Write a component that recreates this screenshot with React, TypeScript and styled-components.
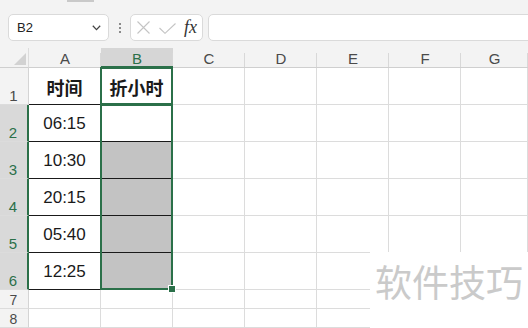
import styled, { createGlobalStyle } from 'styled-components'

const GREEN = '#2b7049'
const GRID = '#dcdcdc'
const INK = '#1a1a1a'

const times = ['06:15', '10:30', '20:15', '05:40', '12:25']
const cols = ['A', 'B', 'C', 'D', 'E', 'F', 'G']

const Global = createGlobalStyle`
  html, body { margin: 0; padding: 0; background: #ffffff; }
  body { width: 528px; height: 328px; overflow: hidden; font-family: "Liberation Sans", "Noto Sans CJK SC", sans-serif; }
`

function Blanks({ count }: { count: number }) {
  return (
    <>
      {Array.from({ length: count }).map((_, i) => (
        <Cell key={i} />
      ))}
    </>
  )
}

export default function App() {
  return (
    <Page>
      <Global />
      <Toolbar>
        <Grip />
        <BarRow>
          <NameBox>
            <span>B2</span>
            <svg width="9" height="6" viewBox="0 0 9 6">
              <path d="M0.8 0.8 L4.5 4.6 L8.2 0.8" fill="none" stroke="#444" strokeWidth="1.3" />
            </svg>
          </NameBox>
          <Dots>
            <i />
            <i />
            <i />
          </Dots>
          <FxGroup>
            <svg width="13" height="13" viewBox="0 0 13 13">
              <path d="M0.5 0.5 L12.5 12.5 M12.5 0.5 L0.5 12.5" stroke="#c4c4c4" strokeWidth="1.1" />
            </svg>
            <svg width="17" height="11" viewBox="0 0 17 11">
              <path d="M0.5 5 L6 10.3 L16.5 0.5" fill="none" stroke="#c4c4c4" strokeWidth="1.1" />
            </svg>
            <Fx>fx</Fx>
          </FxGroup>
          <FormulaBar />
        </BarRow>
      </Toolbar>

      <Sheet>
        <Corner>
          <svg width="12" height="12" viewBox="0 0 12 12">
            <path d="M12 0 L12 12 L0 12 Z" fill="#d2d2d2" />
          </svg>
        </Corner>
        {cols.map((c) => (
          <ColHead key={c} $sel={c === 'B'}>{c}</ColHead>
        ))}

        <RowHead>1</RowHead>
        <Cell $table $bold>时间</Cell>
        <Cell $table $bold>折小时</Cell>
        <Blanks count={5} />

        {times.map((t, r) => (
          <Row key={t} n={r + 2} time={t} fill={r > 0} />
        ))}

        {[7, 8].map((n) => (
          <Row key={n} n={n} />
        ))}

        <Selection $row="2 / 3" />
        <Selection $row="3 / 8">
          <Handle />
        </Selection>
      </Sheet>

      <Watermark>软件技巧</Watermark>
    </Page>
  )
}

function Row({ n, time, fill }: { n: number; time?: string; fill?: boolean }) {
  if (!time) {
    return (
      <>
        <RowHead $small>{n}</RowHead>
        <Blanks count={7} />
      </>
    )
  }
  return (
    <>
      <RowHead $sel>{n}</RowHead>
      <Cell $table>{time}</Cell>
      <Cell $table $fill={fill} />
      <Blanks count={5} />
    </>
  )
}

const Page = styled.div`
  position: relative;
  width: 528px;
  height: 328px;
  overflow: hidden;
`

const Toolbar = styled.div`
  height: 48px;
  background: #f3f3f3;
  display: flex;
  flex-direction: column;
`

const Grip = styled.div`
  width: 27px;
  height: 2px;
  margin-left: 67px;
  background: #c9c9c9;
`

const BarRow = styled.div`
  display: flex;
  align-items: center;
  margin-top: 12px;
  padding-left: 8px;
`

const NameBox = styled.div`
  width: 101px;
  height: 27px;
  box-sizing: border-box;
  border: 1px solid #dadada;
  border-radius: 5px;
  background: #fff;
  display: flex;
  align-items: center;
  justify-content: space-between;
  padding: 0 7px 0 8px;
  font-size: 13px;
  color: #222;
`

const Dots = styled.div`
  width: 21px;
  display: flex;
  flex-direction: column;
  align-items: center;
  gap: 2px;
  i { width: 2px; height: 2px; background: #8a8a8a; display: block; }
`

const FxGroup = styled.div`
  width: 73px;
  height: 27px;
  box-sizing: border-box;
  border: 1px solid #dadada;
  border-radius: 5px;
  background: #fff;
  display: flex;
  align-items: center;
  padding-left: 6px;
  gap: 9px;
  svg:nth-child(2) { margin-top: 2px; }
`

const Fx = styled.span`
  font-family: "Liberation Serif", serif;
  font-style: italic;
  font-size: 18px;
  color: #333;
  margin-left: -1px;
`

const FormulaBar = styled.div`
  flex: 1;
  height: 27px;
  margin-left: 5px;
  margin-right: -8px;
  box-sizing: border-box;
  border: 1px solid #dadada;
  border-radius: 5px;
  background: #fff;
`

const Sheet = styled.div`
  position: relative;
  display: grid;
  grid-template-columns: 29px repeat(6, 72px) 1fr;
  grid-template-rows: 20px repeat(6, 37px) 19px 19px 1fr;
  height: 280px;
`

const Corner = styled.div`
  background: #f3f3f3;
  border-right: 1px solid ${GRID};
  border-bottom: 1px solid #cfcfcf;
  display: flex;
  align-items: flex-end;
  justify-content: flex-end;
  padding: 0 2px 2px 0;
`

const ColHead = styled.div<{ $sel?: boolean }>`
  position: relative;
  background: ${(p) => (p.$sel ? '#d6d6d6' : '#f3f3f3')};
  border-bottom: ${(p) => (p.$sel ? `2px solid ${GREEN}` : '1px solid #cfcfcf')};
  color: ${(p) => (p.$sel ? GREEN : '#4a4a4a')};
  font-size: 15px;
  display: flex;
  align-items: center;
  justify-content: center;
  padding-top: 2px;
  &::after {
    content: '';
    position: absolute;
    right: 0;
    top: 5px;
    bottom: 0;
    width: 1px;
    background: #d8d8d8;
  }
`

const RowHead = styled.div<{ $sel?: boolean; $small?: boolean }>`
  background: ${(p) => (p.$sel ? '#d9d9d9' : '#f3f3f3')};
  border-right: ${(p) => (p.$sel ? `2px solid ${GREEN}` : '1px solid #d4d4d4')};
  border-bottom: 1px solid #dcdcdc;
  color: ${(p) => (p.$sel ? GREEN : '#4a4a4a')};
  font-size: ${(p) => (p.$small ? '14px' : '15px')};
  line-height: 1;
  display: flex;
  align-items: flex-end;
  justify-content: center;
  padding: 0 1px 1px 0;
`

const Cell = styled.div<{ $table?: boolean; $bold?: boolean; $fill?: boolean }>`
  background: ${(p) => (p.$fill ? '#c3c3c3' : '#fff')};
  border-right: 1px solid ${(p) => (p.$table ? INK : GRID)};
  border-bottom: 1px solid ${(p) => (p.$table ? INK : GRID)};
  display: flex;
  align-items: center;
  justify-content: center;
  font-family: ${(p) => (p.$bold ? '"Noto Sans CJK SC", sans-serif' : '"Liberation Sans", "Noto Sans CJK SC", sans-serif')};
  font-weight: ${(p) => (p.$bold ? 700 : 400)};
  font-size: ${(p) => (p.$bold ? '18px' : '17px')};
  color: ${INK};
  padding-top: 1px;
`

/* selection outline sits over the B cells, anchored to their grid area */
const Selection = styled.div<{ $row: string }>`
  position: absolute;
  grid-column: 3 / 4;
  grid-row: ${(p) => p.$row};
  top: -1px;
  left: -1px;
  right: 0;
  bottom: 0;
  border: 2px solid ${GREEN};
  pointer-events: none;
  z-index: 2;
`

const Handle = styled.div`
  position: absolute;
  right: -5px;
  bottom: -5px;
  width: 6px;
  height: 6px;
  background: ${GREEN};
  border: 1px solid #fff;
`

const Watermark = styled.div`
  position: absolute;
  left: 370px;
  top: 252px;
  right: 0;
  bottom: 0;
  background: #fff;
  color: #cacaca;
  font-family: "Noto Sans CJK SC", sans-serif;
  font-size: 37px;
  line-height: 1;
  padding: 11px 0 0 5px;
  z-index: 3;
`
